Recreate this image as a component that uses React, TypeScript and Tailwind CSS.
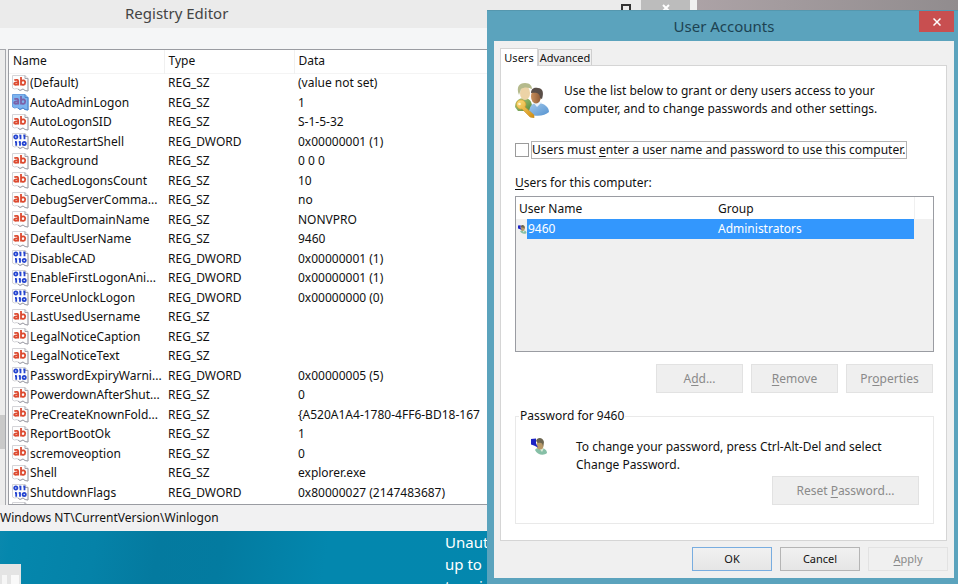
import React from "react";

type Kind = "sz" | "dword";

const values: [string, Kind, string][] = [
  ["(Default)", "sz", "(value not set)"],
  ["AutoAdminLogon", "sz", "1"],
  ["AutoLogonSID", "sz", "S-1-5-32"],
  ["AutoRestartShell", "dword", "0x00000001 (1)"],
  ["Background", "sz", "0 0 0"],
  ["CachedLogonsCount", "sz", "10"],
  ["DebugServerComma...", "sz", "no"],
  ["DefaultDomainName", "sz", "NONVPRO"],
  ["DefaultUserName", "sz", "9460"],
  ["DisableCAD", "dword", "0x00000001 (1)"],
  ["EnableFirstLogonAni...", "dword", "0x00000001 (1)"],
  ["ForceUnlockLogon", "dword", "0x00000000 (0)"],
  ["LastUsedUsername", "sz", ""],
  ["LegalNoticeCaption", "sz", ""],
  ["LegalNoticeText", "sz", ""],
  ["PasswordExpiryWarni...", "dword", "0x00000005 (5)"],
  ["PowerdownAfterShut...", "sz", "0"],
  ["PreCreateKnownFold...", "sz", "{A520A1A4-1780-4FF6-BD18-167"],
  ["ReportBootOk", "sz", "1"],
  ["scremoveoption", "sz", "0"],
  ["Shell", "sz", "explorer.exe"],
  ["ShutdownFlags", "dword", "0x80000027 (2147483687)"],
];

function ValueIcon({ kind, selected }: { kind: Kind; selected?: boolean }) {
  return (
    <svg viewBox="0 0 17 17" className="h-[17px] w-[17px] shrink-0" aria-hidden="true">
      <path
        d="M.5.5h12.500l3 3v12.500l-3-.5-2-1.500-3 1.500-3-2-2.500.5-2-1z"
        fill={selected ? "#7db4f0" : "#fdfdfd"}
        stroke={selected ? "#6a9fe0" : "#d4d4d8"}
      />
      <path d="M13 .5v3h3v12.500l-3-.5-2-1.500-3 1.500-2-1.500" fill="none" stroke={selected ? "#4f86cc" : "#a2a2aa"} />
      {kind === "sz" ? (
        <g fill="none" stroke={selected ? "#7b62a8" : "#dc4a30"} strokeWidth="1.800">
          <path d="M2.300 5.200q3.900-1.200 3.900 1.200V10.500M6.200 7.500c-2.300-.3-4 .1-4 1.200 0 1.500 3 1.400 4 0" />
          <path d="M9 2V10.500M9 6.800c.8-2.200 4.200-2 4.200 .8s-3.400 3-4.200 1" />
        </g>
      ) : (
        <g fill="none" stroke="#2444d0" strokeWidth="1.800">
          <ellipse cx="3.800" cy="4" rx="1.600" ry="1.600" />
          <path d="M8.500 1.700v4.600M12.500 1.700v4.600M7.300 2.500h1M11.300 2.500h1" />
          <path d="M4.200 8.200v4.600M8 8.200v4.600M3 9h1M6.800 9h1" />
          <ellipse cx="12.200" cy="10.500" rx="1.600" ry="1.600" />
        </g>
      )}
    </svg>
  );
}

function UsersIcon() {
  return (
    <svg viewBox="0 0 34 35" className="h-[35px] w-[34px] shrink-0" aria-hidden="true">
      <defs>
        <linearGradient id="green" x2="1" y2="1"><stop stopColor="#b5cf83" /><stop offset="1" stopColor="#53883b" /></linearGradient>
        <linearGradient id="blue" x2="1" y2="1"><stop stopColor="#a4c9ec" /><stop offset="1" stopColor="#5593d0" /></linearGradient>
        <linearGradient id="gold" x2="1" y2="1"><stop stopColor="#ffe07a" /><stop offset="1" stopColor="#cf8a10" /></linearGradient>
        <linearGradient id="skin" x2="1" y2="0"><stop stopColor="#c98f5c" /><stop offset="1" stopColor="#8d5a36" /></linearGradient>
      </defs>
      <path d="M0 24c0-6 4-9 9-9s8 3 8 9l-3 4H3z" fill="url(#green)" />
      <ellipse cx="10" cy="10" rx="5" ry="7" fill="#ecd3a6" />
      <path d="M4 12C1 4 4 0 10 0c5 0 7 3 7 6-4-2-8-2-11 0z" fill="#b5ba8c" />
      <path d="M14 31c0-8 3-11 9-11s11 4 11 9c-4 4-13 5-20 2z" fill="url(#blue)" />
      <path d="M18 19l4 5 5-5z" fill="#e8f1fa" />
      <ellipse cx="21" cy="13.500" rx="5" ry="7" fill="url(#skin)" />
      <path d="M16 10c0-5 4-6 7-5 5 0 6 5 4 11l-2-1c0-4-2-6-9-5z" fill="#5a4e48" />
      <path d="M2 19c3-4 9-2 9 3l-1 2 9 8v3l-4-1-8-8c-4 1-7-4-5-7z" fill="url(#gold)" stroke="#c9932b" strokeWidth=".6" />
      <circle cx="4.500" cy="21" r="1.300" fill="#fff5cf" />
    </svg>
  );
}

function UserIcon({ small }: { small?: boolean }) {
  return (
    <svg viewBox="0 0 17 17" className={small ? "h-[9px] w-[9px] shrink-0" : "h-[17px] w-[17px] shrink-0"} aria-hidden="true">
      <path d="M4 12c1-2 3-2 6-2s6 2 6 5c-3 3-10 2-12-3z" fill="#86bfa6" />
      <path d="M8 10l3 4 2-4z" fill="#dcebd9" />
      <ellipse cx="9" cy="7" rx="3.500" ry="4.500" fill="#b99a68" />
      <path d="M5 3c1-4 7-4 8 1l-1 5c0-4-2-5-5-4z" fill="#6d6650" />
      <path d="M0 1l5-.5v5l2 4-4-2-3-1z" fill="#1c22c4" />
    </svg>
  );
}

const U = ({ children }: { children: string }) => <span className="underline underline-offset-2">{children}</span>;

const disabledButton = "h-[29px] border border-[#e2e2e2] bg-[#efefef] text-[#8a8a8a]";

function RegistryEditor() {
  return (
    <section className="relative flex h-[531px] flex-col bg-[#f1f1f2]">
      <header className="flex h-7 shrink-0 items-center bg-[#ebebeb] pl-[125px] text-[15px] leading-[26px] text-[#444]">
        <h1 className="pb-[2px]">Registry Editor</h1>
      </header>
      <div className="absolute top-0 right-0 flex h-[10px] w-[337px] overflow-hidden bg-gradient-to-r from-[#b4a9ad] to-[#918c8e]">
        <div className="flex w-[69px] bg-[#ebebeb]">
          <button aria-label="Maximize" className="flex w-[10px] justify-end pt-1">
            <span className="h-2 w-[10px] border-2 border-b-0 border-[#333]" />
          </button>
          <button aria-label="Close Registry Editor" className="ml-auto flex w-[49px] items-start justify-center bg-[#bcbcbc]">
            <svg viewBox="0 0 8 8" className="mt-1 h-2 w-2"><path d="M1 1l6 6M7 1L1 7" stroke="#fff" strokeWidth="2" /></svg>
          </button>
        </div>
        <div className="w-[7px] bg-[#f0f0f0]" />
      </div>
      <div className="h-[21px] shrink-0 bg-[#f5f6f7]" />
      <div className="flex min-h-0 flex-1">
        <div className="flex w-[6px] flex-col justify-end border-t border-r border-[#a5a7ac] bg-[#ececec] pb-14">
          <div className="h-[34px] bg-[#c9c9c9]" />
        </div>
        <div className="ml-[2px] min-w-0 flex-1 overflow-hidden border border-[#9a9ca2] bg-white">
          <table className="w-full table-fixed border-collapse text-left text-xs whitespace-nowrap text-[#111]">
            <colgroup>
              <col className="w-[155px]" />
              <col className="w-[130px]" />
              <col />
            </colgroup>
            <thead>
              <tr className="h-[23px] border-b border-[#f4f4f4]">
                <th className="border-r border-[#f0f0f0] p-0 pl-1 font-normal">Name</th>
                <th className="border-r border-[#f0f0f0] p-0 pl-1 font-normal">Type</th>
                <th className="p-0 pl-1 font-normal">Data</th>
              </tr>
            </thead>
            <tbody>
              {values.map(([name, kind, data]) => (
                <tr key={name} className="odd:h-5 even:h-[19px]">
                  <td className="p-0 pl-[3px]">
                    <div className="flex items-center gap-px">
                      <ValueIcon kind={kind} selected={name === "AutoAdminLogon"} />
                      {name}
                    </div>
                  </td>
                  <td className="p-0 pl-1">{kind === "sz" ? "REG_SZ" : "REG_DWORD"}</td>
                  <td className="p-0 pl-1">{data}</td>
                </tr>
              ))}
              <tr>
                <td className="p-0 pl-[3px]"><ValueIcon kind="sz" /></td>
              </tr>
            </tbody>
          </table>
        </div>
      </div>
      <footer className="flex h-[26px] shrink-0 items-center text-xs text-[#111]">Windows NT\CurrentVersion\Winlogon</footer>
    </section>
  );
}

function UserAccounts() {
  return (
    <section className="absolute top-[10px] right-0 bottom-0 flex w-[471px] flex-col border-t border-[#5597ae] bg-[#5ba3bd] pr-1 pb-[6px] pl-[7px] text-xs leading-[18px] text-[#111]">
      <header className="relative flex h-[30px] shrink-0 items-center justify-center text-[15px] text-[#1d4252]">
        <h2>User Accounts</h2>
        <button aria-label="Close" className="absolute top-0 right-0 flex h-[21px] w-[35px] items-center justify-center bg-[#c84f50]">
          <svg viewBox="0 0 8 8" className="h-2 w-2"><path d="M.5.5l7 7M7.500.5l-7 7" stroke="#fff" strokeWidth="1.500" /></svg>
        </button>
      </header>
      <div className="flex flex-1 flex-col bg-[#f0f0f0] px-[6px] pt-[7px]">
        <div role="tablist" className="flex h-[17px] shrink-0 items-end text-[11px]">
          <button role="tab" aria-selected="true" className="relative z-10 -mb-px h-[18px] w-[38px] border border-b-0 border-[#d5d5d5] bg-white leading-4">Users</button>
          <button role="tab" aria-selected="false" className="flex h-4 w-[54px] justify-center border border-b-0 border-[#cfcfcf] leading-4">Advanced</button>
        </div>
        <div role="tabpanel" className="mr-px flex h-[476px] shrink-0 flex-col border border-[#d5d5d5] bg-white pr-3 pl-[14px]">
          <div className="flex items-center gap-[15px] pt-4">
            <UsersIcon />
            <p>Use the list below to grant or deny users access to your<br />computer, and to change passwords and other settings.</p>
          </div>
          <div className="mt-[23px] flex items-center gap-[2px] whitespace-nowrap">
            <input id="must" type="checkbox" className="h-[14px] w-[14px] shrink-0 appearance-none border border-[#9b9b9b] bg-white" />
            <label htmlFor="must" className="border border-[#b4b4b4] pr-px leading-4">Users must <U>e</U>nter a user name and password to use this computer.</label>
          </div>
          <p className="mt-[15px]"><U>U</U>sers for this computer:</p>
          <div className="mt-1 h-[156px] border border-[#9a9ca2] bg-[#f0f0f0]">
            <table className="w-full table-fixed border-collapse text-left">
              <colgroup><col className="w-[199px]" /><col /><col className="w-[19px]" /></colgroup>
              <thead>
                <tr className="h-[22px] bg-white">
                  <th className="p-0 pt-[2px] pl-[3px] font-normal">User Name</th>
                  <th className="p-0 pt-[2px] pl-[3px] font-normal">Group</th>
                  <td className="border-l border-[#f0f0f0] p-0" />
                </tr>
              </thead>
              <tbody>
                <tr className="h-5 text-white">
                  <td className="p-0">
                    <div className="flex h-5 items-center pl-[2px]">
                      <UserIcon small />
                      <span className="h-5 flex-1 bg-[#3397fd] pt-px pl-px">9460</span>
                    </div>
                  </td>
                  <td className="bg-[#3397fd] p-0 pl-[3px]">Administrators</td>
                  <td className="p-0" />
                </tr>
              </tbody>
            </table>
          </div>
          <div className="mt-3 mr-px flex justify-end gap-2">
            <button disabled className={`w-[87px] ${disabledButton}`}>A<U>d</U>d...</button>
            <button disabled className={`w-[87px] ${disabledButton}`}><U>R</U>emove</button>
            <button disabled className={`w-[87px] ${disabledButton}`}>Pr<U>o</U>perties</button>
          </div>
          <fieldset className="mt-[14px] h-[117px] border border-[#e9e9e9] px-[14px]">
            <legend className="-ml-[11px] px-px">Password for 9460</legend>
            <div className="mt-[13px] flex gap-7 pl-px">
              <UserIcon />
              <p>To change your password, press Ctrl-Alt-Del and select<br />Change Password.</p>
            </div>
            <div className="mt-[2px] flex justify-end">
              <button disabled className={`w-[147px] ${disabledButton}`}>Reset <U>P</U>assword...</button>
            </div>
          </fieldset>
        </div>
        <div className="mt-[6px] flex justify-end gap-2 text-[11px]">
          <button className="h-6 w-20 border border-[#78ade0] bg-gradient-to-b from-[#f1f1f1] to-[#e6e6e6]">OK</button>
          <button className="h-6 w-20 border border-[#b5b5b5] bg-gradient-to-b from-[#f1f1f1] to-[#e6e6e6]">Cancel</button>
          <button disabled className="h-6 w-20 border border-[#e2e2e2] text-[#8a8a8a]"><U>A</U>pply</button>
        </div>
      </div>
    </section>
  );
}

export default function App() {
  return (
    <main className="relative h-screen overflow-hidden bg-[linear-gradient(100deg,#2e93b5_0%,#0587ad_10%,#0582a8_18%,#047a9f_24%,#037ba0_30%,#0387ae_40%,#0487ae_100%)] font-['Noto_Sans','Open_Sans',sans-serif]">
      <RegistryEditor />
      <div className="flex justify-between text-[15px] leading-[22px] text-white">
        <div className="mt-[33px] flex h-5 w-[21px] items-end gap-1 bg-[#e4e4e4] px-[2px] pt-[11px]">
          <div className="h-full w-[5px] bg-[#f6f6f6]" />
          <div className="h-full w-2 bg-[#f9f9f9]" />
        </div>
        <p className="mr-[471px] w-[42px] whitespace-nowrap">Unaut<br />up to<br />termi</p>
      </div>
      <UserAccounts />
    </main>
  );
}
